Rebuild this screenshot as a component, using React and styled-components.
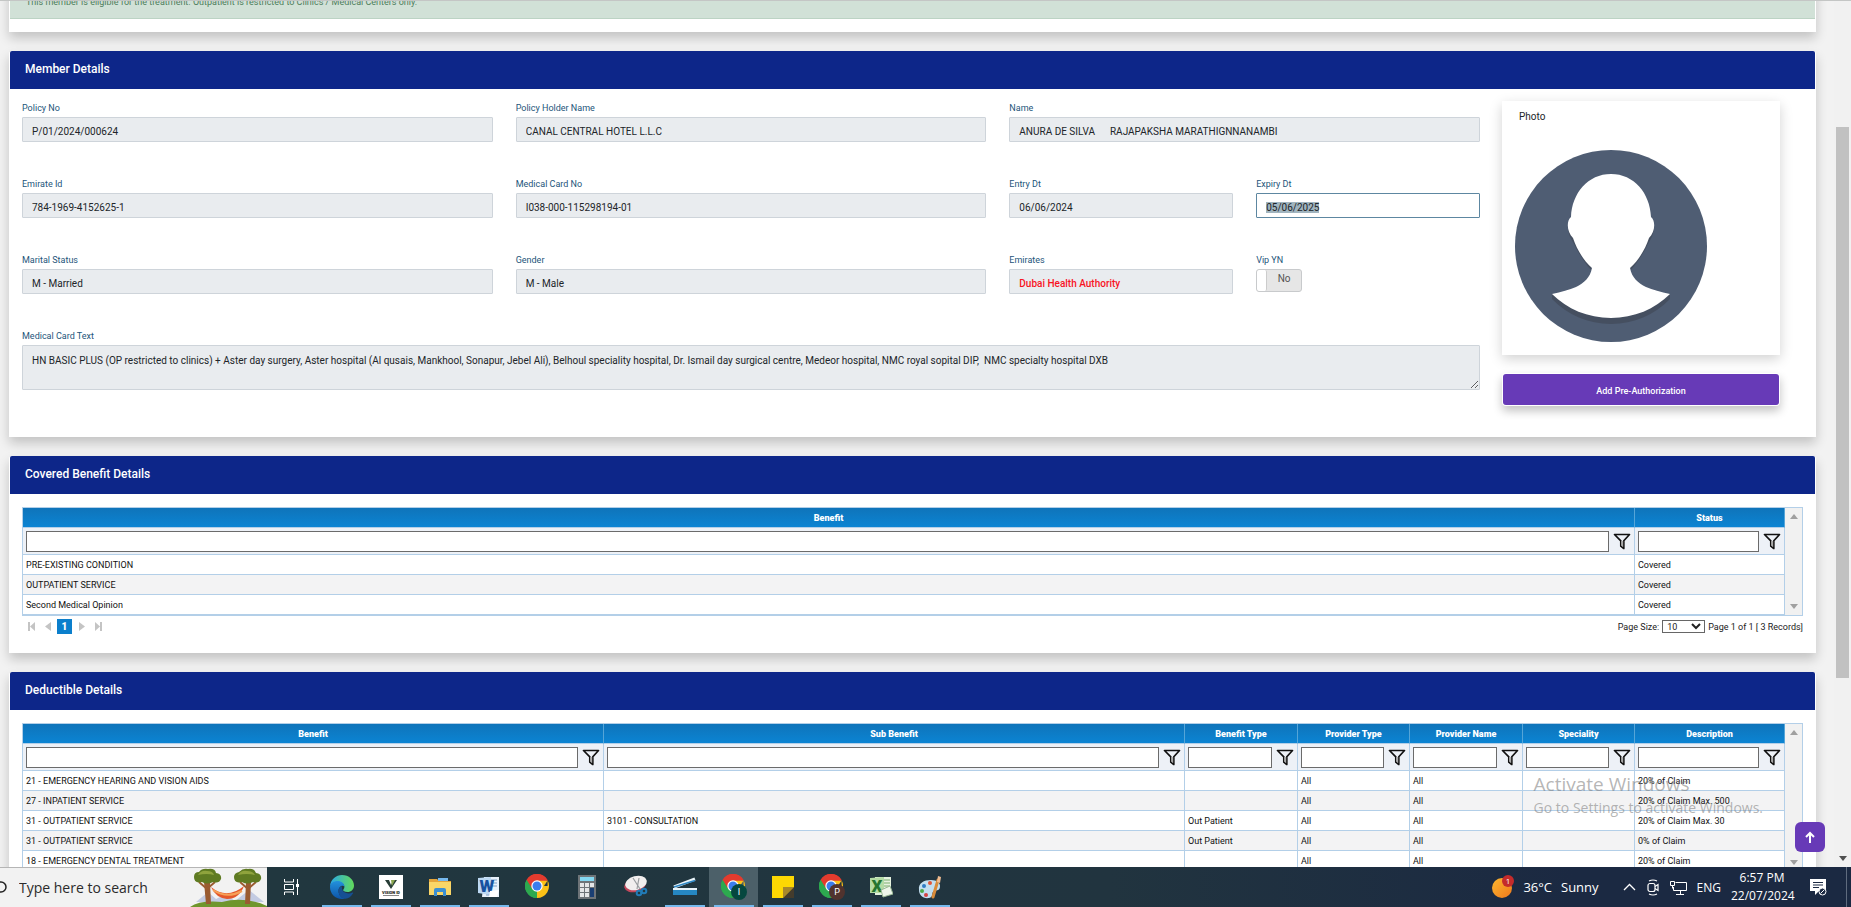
import { useEffect, useRef } from 'react'
import styled, { createGlobalStyle } from 'styled-components'

const GlobalStyle = createGlobalStyle`
    *, *::before, *::after{
        box-sizing: border-box;
    }
    body{
        margin: 0;
        background-color: #f3f3f3;
        font-family: Roboto, "Liberation Sans", sans-serif;
        font-size: 10px;
        color: #212529;
    }
    button, input, select, textarea{
        font-family: inherit;
        font-size: inherit;
        color: inherit;
        margin: 0;
    }
`

const Screen = styled.div`
    height: 100vh;
    display: flex;
    flex-direction: column;
    overflow: hidden;
`

const Browser = styled.div`
    position: relative;
    flex: 1;
    min-height: 0;
    display: flex;
    border-top: 1px solid #c4c6c5;
`

const Page = styled.main`
    flex: 1;
    min-width: 0;
    overflow: hidden;
    padding: 0 18px 0 9px;
    background-color: #f2f2f2;
`

const Scrollbar = styled.div`
    flex: none;
    width: 17px;
    padding: 0 2px;
    background-color: #f1f1f1;
    display: flex;
    flex-direction: column;
    justify-content: space-between;
    align-items: center;
    svg{
        margin-bottom: 6px;
    }
`

const Thumb = styled.div`
    width: 13px;
    height: 551px;
    margin-top: 126px;
    background-color: #c1c1c1;
`

/* cards */

const Card = styled.section`
    margin-bottom: 19px;
    border: 1px solid #fff;
    border-top: none;
    border-radius: 3px 3px 0 0;
    background-color: #fff;
    box-shadow: 0 6px 12px rgba(0, 0, 0, .2);
`

const CardTitle = styled.h2`
    margin: 0;
    height: 38px;
    padding: 0 15px;
    border-radius: 2px 2px 0 0;
    background-color: #0d2689;
    color: #fff;
    font-size: 12px;
    font-weight: 500;
    line-height: 36px;
`

const AlertCard = styled(Card)`
    margin-top: -20px;
    padding-bottom: 12px;
`

const Alert = styled.p`
    margin: 0;
    height: 38px;
    padding: 14px 16px 0;
    border-bottom: 1px solid #bcd3c4;
    background-color: #d1e1d7;
    color: #4d7d5b;
    font-size: 9px;
    line-height: 14px;
`

const MemberBody = styled.div`
    display: grid;
    grid-template-columns: minmax(0, 1fr) 278px;
    gap: 22px;
    padding: 12px 35px 31px 12px;
`

const Fields = styled.form`
    display: grid;
    grid-template-columns: repeat(6, minmax(0, 1fr));
    gap: 35px 23px;
    align-content: start;
`

const FieldStyled = styled.div`
    grid-column: span ${props => props.$span};
    display: flex;
    flex-direction: column;
    align-items: stretch;
    gap: 2px;
    > label:first-child{
        color: #24557a;
        font-size: 9px;
        line-height: 14px;
    }
`

const TextInput = styled.input`
    width: 100%;
    height: 25px;
    padding: 3px 9px 0;
    border: 1px solid ${props => props.$active ? '#5d87a1' : '#ced4da'};
    border-radius: 1px;
    outline: none;
    background-color: ${props => props.$active ? '#fff' : '#e9ecef'};
    color: ${props => props.$alert ? '#f8141f' : '#212529'};
    font-weight: ${props => props.$alert ? 500 : 400};
    &::selection{
        background-color: #a0b4bf;
        color: #212529;
    }
`

const TextArea = styled.textarea`
    display: block;
    width: 100%;
    height: 45px;
    padding: 8px 9px;
    border: 1px solid #ced4da;
    border-radius: 1px;
    outline: none;
    background-color: #e9ecef;
    line-height: 14px;
    resize: vertical;
`

const Toggle = styled.label`
    width: 46px;
    height: 23px;
    display: flex;
    border: 1px solid #c8cacc;
    border-radius: 3px;
    background-color: #e6e6e6;
    overflow: hidden;
    input{
        appearance: none;
        width: 10px;
        border-right: 1px solid #ccc;
        border-radius: 2px;
        background-color: #fff;
    }
    span{
        flex: 1;
        color: #555;
        line-height: 18px;
        text-align: center;
    }
`

const Side = styled.aside`
    display: flex;
    flex-direction: column;
    gap: 19px;
`

const PhotoCard = styled.figure`
    margin: 0;
    height: 254px;
    padding: 9px 13px 13px;
    background-color: #fff;
    box-shadow: 0 4px 12px rgba(0, 0, 0, .18);
    figcaption{
        height: 40px;
        padding-left: 4px;
        line-height: 14px;
    }
    svg{
        display: block;
        width: 192px;
        height: 192px;
    }
`

const PrimaryButton = styled.button`
    height: 31px;
    margin: 0 1px;
    padding: 2px 0 0;
    border: none;
    border-radius: 3px;
    background-color: #673ab7;
    color: #fff;
    font-size: 9px;
    font-weight: 500;
    box-shadow: 0 0 0 1px #fff, 0 5px 10px 1px rgba(0, 0, 0, .24);
`

/* grids */

const GridBody = styled.div`
    padding: 13px 12px 18px;
    font-size: 9px;
`

const GridFrame = styled.div`
    display: flex;
    height: ${props => props.$height}px;
    border: 1px solid #b3cfe8;
    overflow: hidden;
`

const GridScroll = styled.div`
    flex: none;
    width: 17px;
    padding: 6px 0;
    display: flex;
    flex-direction: column;
    justify-content: space-between;
    align-items: center;
    background-color: #f1f1f1;
`

const Table = styled.table`
    flex: 1;
    min-width: 0;
    width: 100%;
    table-layout: fixed;
    border-collapse: separate;
    border-spacing: 0;
    color: #111;
    font-size: 9px;
    th, td{
        padding: 0 3px;
        border-right: 1px solid #b3cfe8;
        border-bottom: 1px solid #b3cfe8;
        text-align: left;
        white-space: nowrap;
    }
    .titles th{
        height: 20px;
        border-right-color: #55a5d8;
        background: linear-gradient(#0f74ba, #0b84d3);
        color: #fff;
        font-weight: 900;
        text-align: center;
    }
    .filters td{
        height: 27px;
        background-color: #edf1f7;
    }
    .record{
        height: 20px;
    }
    .record:nth-child(even){
        background-color: #f3f3f4;
    }
`

const Filter = styled.div`
    display: flex;
    align-items: center;
    gap: 4px;
    input{
        flex: 1;
        min-width: 0;
        height: 21px;
        border: 1px solid #6b6b6b;
        outline: none;
        background-color: #fff;
    }
    button{
        display: flex;
        padding: 0;
        border: none;
        background: none;
    }
`

const Pager = styled.div`
    display: flex;
    justify-content: space-between;
    align-items: center;
    height: 18px;
    padding-top: 3px;
    color: #222;
`

const Pages = styled.nav`
    display: flex;
    align-items: center;
    gap: 2px;
    padding-left: 1px;
    button{
        width: 15px;
        height: 15px;
        padding: 0;
        display: flex;
        align-items: center;
        justify-content: center;
        border: none;
        background: none;
    }
    button[aria-current]{
        background-color: #0b7fcc;
        color: #fff;
        font-size: 10px;
        font-weight: 900;
    }
`

const PageSize = styled.div`
    display: flex;
    align-items: center;
    gap: 3px;
    select{
        width: 43px;
        height: 13px;
        padding: 0;
        border: 1px solid #666;
        border-radius: 0;
        background-color: #fff;
    }
`

/* things that float over the page */

const Watermark = styled.div`
    position: absolute;
    right: 88px;
    bottom: 48px;
    color: rgba(120, 120, 120, .55);
    font-family: "Open Sans", "Noto Sans", sans-serif;
    font-size: 14px;
    line-height: 23px;
    pointer-events: none;
    strong{
        display: block;
        font-size: 19px;
        font-weight: 400;
    }
`

const ScrollTop = styled.button`
    position: absolute;
    right: 26px;
    bottom: 15px;
    width: 30px;
    height: 30px;
    padding: 0;
    display: flex;
    align-items: center;
    justify-content: center;
    border: none;
    border-radius: 6px;
    background-color: #673ab7;
`

/* taskbar */

const Taskbar = styled.footer`
    flex: none;
    height: 40px;
    display: flex;
    align-items: stretch;
    background: linear-gradient(90deg, #21383f 0%, #21343f 60%, #1b2942 85%);
    color: #fff;
    font-family: "Open Sans", "Noto Sans", sans-serif;
    font-size: 14px;
`

const Search = styled.label`
    width: 267px;
    display: flex;
    align-items: center;
    justify-content: space-between;
    border-top: 1px solid #b5b5b5;
    background-color: #f2f2f2;
    color: #2b2b2b;
    input{
        flex: 1;
        min-width: 0;
        padding: 0 0 0 12px;
        border: none;
        outline: none;
        background: none;
    }
    input::placeholder{
        color: #2b2b2b;
        opacity: 1;
    }
`

const Apps = styled.div`
    display: flex;
    padding-left: 1px;
    flex: 1;
`

const AppButton = styled.button`
    width: 49px;
    padding: 0 4px;
    border: none;
    background-color: ${props => props.$active ? '#4c6069' : 'transparent'};
    display: flex;
    flex-direction: column;
    align-items: center;
    justify-content: space-between;
    &::before{
        content: '';
        height: 2px;
    }
    &::after{
        content: '';
        width: 40px;
        height: 2px;
        background-color: ${props => props.$open ? '#76b9ed' : 'transparent'};
    }
`

const Tray = styled.div`
    display: flex;
    align-items: center;
    padding-right: 4px;
    .weather{
        display: flex;
        align-items: center;
        gap: 9px;
        margin-right: 24px;
        font-size: 13px;
    }
    .icons{
        display: flex;
        align-items: center;
        gap: 10px;
        margin-right: 10px;
        font-size: 12px;
    }
    .clock{
        width: 62px;
        margin-right: 17px;
        font-size: 12px;
        line-height: 18px;
        text-align: center;
    }
    .desktop{
        align-self: stretch;
        width: 1px;
        margin-left: 19px;
        background-color: #5f6b7e;
    }
`

const Arrow = ({ up, color = '#a0a0a0' }) => (
    <svg width="8" height="5" viewBox="0 0 8 5">
        <path d={up ? 'M0 5 4 0l4 5z' : 'M0 0h8L4 5z'} fill={color} />
    </svg>
)

const Funnel = () => (
    <svg width="18" height="17" viewBox="0 0 18 17">
        <path d="M1.500 1.500h15l-5.700 6.300v7.700l-3-2.300V7.800z" fill="none" stroke="#111" strokeWidth="1.700" strokeLinejoin="round" />
        <path d="M8.200 8h2v6l-2-1.500z" fill="#aaa" />
    </svg>
)

const PageIcon = ({ d }) => (
    <svg width="8" height="9" viewBox="0 0 8 9">
        <path d={d} fill="#c4c4c4" />
    </svg>
)

const Avatar = () => (
    <svg viewBox="0 0 192 192">
        <circle cx="96" cy="96" r="96" fill="#4f5d73" />
        <path d="M53 76 C53 84 56 89 59 94 C65 106 70 113 76 120 L78 112z M139 76 C139 84 136 89 133 94 C127 106 122 113 116 120 L114 112z" fill="#454f60" />
        <path d="M37 144v5C53 165 73 174 96 174S139 165 155 149v-5z" fill="#454f60" />
        <path d="M96 24 C119 24 135 43 136 67 C141 71 140 82 134 88 C130 100 123 111 115 118 C117 128 123 133 131 137 Q141 141 155 144 C140 159 119 168 96 168 S52 159 37 144 Q51 141 61 137 C69 133 75 128 77 118 C69 111 62 100 58 88 C52 82 51 71 56 67 C57 43 73 24 96 24z" fill="#fff" />
    </svg>
)

const Chrome = ({ badge, color }) => (
    <svg width="26" height="26" viewBox="0 0 26 26">
        <path d="M12 12 1.600 6A12 12 0 0 1 22.400 6z" fill="#e33b2e" />
        <path d="M12 12H22.600V6.300A12 12 0 0 1 12 24z" fill="#fbc116" />
        <path d="M12 12v12A12 12 0 0 1 1.600 6z" fill="#2da94f" />
        <path d="M12 6.500h10.600L17 15z" fill="#fbc116" />
        <path d="M12 6.500h10.700L22.200 5.500A12 12 0 0 0 1.600 6L7 15z" fill="#e33b2e" />
        <path d="M1.600 6 7.200 15 12 17.500l-.5 6.500A12 12 0 0 1 1.600 6z" fill="#2da94f" />
        <circle cx="12" cy="12" r="5.700" fill="#fff" />
        <circle cx="12" cy="12" r="4.500" fill="#3b7ded" />
        {badge && <circle cx="18" cy="18" r="8" fill={color} />}
        {badge && <text x="18" y="21" fill="#fff" fontSize="9" textAnchor="middle" fontFamily="Roboto">{badge}</text>}
    </svg>
)

const Edge = () => (
    <svg width="26" height="26" viewBox="0 0 26 26">
        <defs>
            <linearGradient id="edgeTop" x1="0" x2="1">
                <stop offset="0" stopColor="#2aa8e8" />
                <stop offset="1" stopColor="#62da5a" />
            </linearGradient>
            <linearGradient id="edgeSide" x1="0" y1="0" x2="0" y2="1">
                <stop offset="0" stopColor="#2391dc" />
                <stop offset="1" stopColor="#0d54a8" />
            </linearGradient>
        </defs>
        <path d="M1 12C2 5 7 1 13 1c7 0 12 5 12 10.500 0 4-3 6.500-6.500 6.500-3 0-4.500-1.200-4.300-2 .2-.8 1.200-1.300 1.200-3.200C15.400 10 12 8 8.500 8 4.500 8 2 10 1 12z" fill="url(#edgeTop)" />
        <path d="M1 13c0-4 4-6 7.500-6 4.200 0 7 2.500 6.900 5.500C13 10.500 9.500 13 9.500 17c0 4.500 4 7.600 7 7.700-1 .2-2 .3-3.500.3C6 25 1 19.500 1 13z" fill="url(#edgeSide)" />
        <path d="M9.500 17c0-2 1.200-4 3.500-4.700-1 5.700 5 8.700 10.500 6.200.6-.2.900.2.600.8-2 3.400-4.500 5.200-7.600 5.400-3.500 0-7-3.200-7-7.700z" fill="#164f94" />
    </svg>
)

const VisionId = () => (
    <svg width="24" height="24" viewBox="0 0 24 24">
        <path d="M0 0h24v24H0z" fill="#fff" />
        <path d="M6 5h4l2 5 2-5h4l-6 9z" fill="#273d36" />
        <path d="M12 5h4l-3 6z" fill="#8aa64e" />
        <text x="12" y="19" fontSize="4" fontWeight="900" textAnchor="middle" fill="#222" fontFamily="Roboto">VISION ID</text>
        <path d="M4 20.500h16" stroke="#888" strokeWidth="1" />
    </svg>
)

const Folder = () => (
    <svg width="24" height="22" viewBox="0 0 24 22">
        <path d="M1 3h8l2 2h12v14H1z" fill="#e5a53a" />
        <path d="M10 2h10v3H10z" fill="#77b9ee" />
        <path d="M1 6h22v13H1z" fill="#fad667" />
        <path d="M6 20v-6q0-2 2-2h8q2 0 2 2v6h-3v-4H9v4z" fill="#3c8fd1" />
    </svg>
)

const Word = () => (
    <svg width="24" height="24" viewBox="0 0 24 24">
        <path d="M7 2h15v20H5z" fill="#e8f1fb" />
        <path d="M1 3l13-1v18L1 18z" fill="#bcd8f3" />
        <path d="M14 5h6M15 8h5M15 11h5M9 20h10" stroke="#7f9ec6" />
        <text x="10" y="17" fontSize="17" fontWeight="900" textAnchor="middle" fill="#17529f" fontFamily="Roboto">W</text>
        <path d="M13 16l9-1-2 7h-8z" fill="#fff" />
    </svg>
)

const Calculator = () => (
    <svg width="18" height="24" viewBox="0 0 18 24">
        <path d="M0 0h18v24H0z" fill="#6e7478" />
        <path d="M2 2h14v4H2z" fill="#83d8f2" />
        <path d="M2 8h4v4H2zM7 8h4v4H7zM12 8h4v4h-4zM2 13h4v4H2zM7 13h4v4H7zM2 18h4v4H2zM7 18h4v4H7z" fill="#e4e6e7" />
        <path d="M12 13h4v9h-4z" fill="#1a3f73" />
    </svg>
)

const Snip = () => (
    <svg width="24" height="24" viewBox="0 0 24 24">
        <ellipse cx="11" cy="10" rx="11" ry="7" fill="#c5475b" transform="rotate(-15 11 10)" />
        <ellipse cx="12" cy="8" rx="11" ry="7" fill="#f1eeee" transform="rotate(-15 12 8)" />
        <path d="M9 3l7 11M15 3l-2 11" stroke="#9a9da0" strokeWidth="1.200" />
        <circle cx="15" cy="18" r="2.300" fill="none" stroke="#217bb7" strokeWidth="2" />
        <circle cx="20" cy="16" r="2.300" fill="none" stroke="#217bb7" strokeWidth="2" />
    </svg>
)

const Scanner = () => (
    <svg width="24" height="20" viewBox="0 0 24 20">
        <path d="M1 10 22 2" stroke="#eaf4fa" strokeWidth="3" />
        <path d="M1 10 22 3.500" stroke="#2d87c4" strokeWidth="1.500" />
        <path d="M0 11h24v7H0z" fill="#2687c2" />
        <path d="M0 11h24v2H0z" fill="#e8f3fa" />
    </svg>
)

const Sticky = () => (
    <svg width="22" height="22" viewBox="0 0 22 22">
        <path d="M0 0h22v22H0z" fill="#fdd803" />
        <path d="M11 22V11h11z" fill="#a8892b" />
        <path d="M22 11v11H11z" fill="#443c2c" />
    </svg>
)

const Excel = () => (
    <svg width="24" height="24" viewBox="0 0 24 24">
        <path d="M6 2h16v18H6z" fill="#e5f2df" />
        <path d="M1 3l14-1v16L1 18z" fill="#b3dba4" />
        <path d="M15 5h6M15 8h6M15 11h6" stroke="#7cae70" />
        <text x="8" y="17" fontSize="17" fontWeight="900" textAnchor="middle" fill="#24752f" fontFamily="Roboto">X</text>
        <path d="M12 15l9-4 3 8-10 3z" fill="#eef6ea" stroke="#9ab894" />
    </svg>
)

const Paint = () => (
    <svg width="24" height="25" viewBox="0 0 24 25">
        <path d="M1 15C0 8 6 5 13 5c6 0 9 3 9 6 0 5-3 4-6 5-3 1 0 6-5 7C5 24 1 20 1 15z" fill="#c3dff0" />
        <circle cx="6" cy="11" r="2" fill="#2f7cc5" />
        <circle cx="12" cy="8" r="2" fill="#e05639" />
        <circle cx="4" cy="16" r="2" fill="#4caa49" />
        <circle cx="8" cy="20" r="2" fill="#d44444" />
        <path d="M20 5l-5 17" stroke="#d88b3a" strokeWidth="3" strokeLinecap="round" />
        <path d="M19 7l1-6 3 1-1 6z" fill="#f1bd92" />
    </svg>
)

const TaskView = () => (
    <svg width="17" height="16" viewBox="0 0 17 16" fill="none" stroke="#fff">
        <path d="M1.500 0v3h9V0M1.500 16v-3h9v3M1.500 5.500h9v5h-9zM14.500 0v16" />
        <path d="M13 5h3v3h-3z" fill="#fff" stroke="none" />
    </svg>
)

const Hammock = () => (
    <svg width="77" height="39" viewBox="0 0 77 39">
        <path d="M6 34l12-10 8 7 10-5 9 7 14-11 15 12z" fill="#c3cbe2" />
        <path d="M0 39q10-7 32-5 22-6 45 4v1z" fill="#6f962c" />
        <path d="M14 14l2 22h5l-1-22zM56 14l-1 22h5l1-22z" fill="#9a5b30" />
        <path d="M9 14l8 7 8-7M50 14l8 7 8-7" fill="none" stroke="#9a5b30" strokeWidth="2" />
        <path d="M4 9q0-5 5-5 3-4 9-3 7-1 8 4 6 1 5 6-2 5-8 3-6 3-11 0-8 2-8-5zM44 9q0-4 5-5 4-4 9-3 6-1 8 4 6 1 5 6-2 5-8 3-6 3-11 0-8 2-8-5z" fill="#5f7b22" />
        <path d="M8 7q3-5 9-4 6 0 7 4-7-2-16 0zM48 7q3-5 9-4 6 0 8 4-8-2-17 0z" fill="#8fa33d" />
        <path d="M21 19q16 13 33-1-5 13-17 13-11-1-16-12z" fill="#e4572a" />
        <path d="M23 22q14 9 29 1" fill="none" stroke="#f6a057" strokeWidth="2" />
    </svg>
)

const apps = [
    { name: 'Microsoft Edge', icon: <Edge />, open: true },
    { name: 'Vision ID', icon: <VisionId />, open: true },
    { name: 'File Explorer', icon: <Folder />, open: true },
    { name: 'Word', icon: <Word />, open: true },
    { name: 'Google Chrome', icon: <Chrome /> },
    { name: 'Calculator', icon: <Calculator /> },
    { name: 'Snipping Tool', icon: <Snip /> },
    { name: 'Scan', icon: <Scanner />, open: true },
    { name: 'Google Chrome (I)', icon: <Chrome badge="I" color="#05473f" />, open: true, active: true },
    { name: 'Sticky Notes', icon: <Sticky />, open: true },
    { name: 'Google Chrome (P)', icon: <Chrome badge="P" color="#50332e" />, open: true },
    { name: 'Excel', icon: <Excel />, open: true },
    { name: 'Paint', icon: <Paint />, open: true },
]

const benefitColumns = [
    { title: 'Benefit' },
    { title: 'Status', width: 150 },
]

const benefits = [
    ['PRE-EXISTING CONDITION', 'Covered'],
    ['OUTPATIENT SERVICE', 'Covered'],
    ['Second Medical Opinion', 'Covered'],
]

const deductibleColumns = [
    { title: 'Benefit' },
    { title: 'Sub Benefit' },
    { title: 'Benefit Type', width: 113 },
    { title: 'Provider Type', width: 112 },
    { title: 'Provider Name', width: 113 },
    { title: 'Speciality', width: 112 },
    { title: 'Description', width: 150 },
]

const deductibles = [
    ['21 - EMERGENCY HEARING AND VISION AIDS', '', '', 'All', 'All', '', '20% of Claim'],
    ['27 - INPATIENT SERVICE', '', '', 'All', 'All', '', '20% of Claim Max. 500'],
    ['31 - OUTPATIENT SERVICE', '3101 - CONSULTATION', 'Out Patient', 'All', 'All', '', '20% of Claim Max. 30'],
    ['31 - OUTPATIENT SERVICE', '', 'Out Patient', 'All', 'All', '', '0% of Claim'],
    ['18 - EMERGENCY DENTAL TREATMENT', '', '', 'All', 'All', '', '20% of Claim'],
]

const cardText = 'HN BASIC PLUS (OP restricted to clinics) + Aster day surgery, Aster hospital (Al qusais, Mankhool, Sonapur, Jebel Ali), Belhoul speciality hospital, Dr. Ismail day surgical centre, Medeor hospital, NMC royal sopital DIP,  NMC specialty hospital DXB'

function Field({ id, label, value, span = 2, alert }) {
    return (
        <FieldStyled $span={span}>
            <label htmlFor={id}>{label}</label>
            <TextInput id={id} defaultValue={value} $alert={alert} readOnly />
        </FieldStyled>
    )
}

function DataGrid({ name, columns, rows, height }) {
    return (
        <GridFrame $height={height}>
            <Table>
                <colgroup>
                    {columns.map(column => <col key={column.title} width={column.width} />)}
                </colgroup>
                <thead>
                    <tr className="titles">
                        {columns.map(column => <th key={column.title}>{column.title}</th>)}
                    </tr>
                    <tr className="filters">
                        {columns.map(column => (
                            <td key={column.title}>
                                <Filter>
                                    <input aria-label={`${name} ${column.title}`} />
                                    <button aria-label={`Filter ${column.title}`}><Funnel /></button>
                                </Filter>
                            </td>
                        ))}
                    </tr>
                </thead>
                <tbody>
                    {rows.map((row, i) => (
                        <tr className="record" key={i}>
                            {row.map((cell, j) => <td key={j}>{cell}</td>)}
                        </tr>
                    ))}
                </tbody>
            </Table>
            <GridScroll>
                <Arrow up />
                <Arrow />
            </GridScroll>
        </GridFrame>
    )
}

function MemberDetails() {

    const expiry = useRef(null)

    useEffect(() => {
        expiry.current.focus()
        expiry.current.select()
    }, [])

    return (
        <Card>
            <CardTitle>Member Details</CardTitle>
            <MemberBody>
                <Fields>
                    <Field id="policy" label="Policy No" value="P/01/2024/000624" />
                    <Field id="holder" label="Policy Holder Name" value="CANAL CENTRAL HOTEL L.L.C" />
                    <Field id="name" label="Name" value="ANURA DE SILVA      RAJAPAKSHA MARATHIGNNANAMBI" />
                    <Field id="emirate" label="Emirate Id" value="784-1969-4152625-1" />
                    <Field id="card" label="Medical Card No" value="I038-000-115298194-01" />
                    <Field id="entry" label="Entry Dt" value="06/06/2024" span={1} />
                    <FieldStyled $span={1}>
                        <label htmlFor="expiry">Expiry Dt</label>
                        <TextInput id="expiry" ref={expiry} defaultValue="05/06/2025" $active />
                    </FieldStyled>
                    <Field id="marital" label="Marital Status" value="M - Married" />
                    <Field id="gender" label="Gender" value="M - Male" />
                    <Field id="emirates" label="Emirates" value="Dubai Health Authority" span={1} alert />
                    <FieldStyled $span={1}>
                        <label htmlFor="vip">Vip YN</label>
                        <Toggle>
                            <input id="vip" type="checkbox" />
                            <span>No</span>
                        </Toggle>
                    </FieldStyled>
                    <FieldStyled $span={6}>
                        <label htmlFor="cardText">Medical Card Text</label>
                        <TextArea id="cardText" defaultValue={cardText} readOnly />
                    </FieldStyled>
                </Fields>
                <Side>
                    <PhotoCard>
                        <figcaption>Photo</figcaption>
                        <Avatar />
                    </PhotoCard>
                    <PrimaryButton>Add Pre-Authorization</PrimaryButton>
                </Side>
            </MemberBody>
        </Card>
    )
}

function App() {
    return (
        <Screen>
            <GlobalStyle />
            <Browser>
                <Page>
                    <AlertCard>
                        <Alert>This member is eligible for the treatment. Outpatient is restricted to Clinics / Medical Centers only.</Alert>
                    </AlertCard>
                    <MemberDetails />
                    <Card>
                        <CardTitle>Covered Benefit Details</CardTitle>
                        <GridBody>
                            <DataGrid name="Covered" columns={benefitColumns} rows={benefits} height={109} />
                            <Pager>
                                <Pages>
                                    <button aria-label="First page"><PageIcon d="M1 0h2v9H1zM8 0v9L3 4.500z" /></button>
                                    <button aria-label="Previous page"><PageIcon d="M7 0v9L1 4.500z" /></button>
                                    <button aria-current="page">1</button>
                                    <button aria-label="Next page"><PageIcon d="M1 0v9l6-4.500z" /></button>
                                    <button aria-label="Last page"><PageIcon d="M5 0h2v9H5zM0 0v9l5-4.500z" /></button>
                                </Pages>
                                <PageSize>
                                    <label htmlFor="pageSize">Page Size:</label>
                                    <select id="pageSize" defaultValue="10">
                                        <option>10</option>
                                        <option>20</option>
                                        <option>50</option>
                                    </select>
                                    <span>Page 1 of 1 [ 3 Records]</span>
                                </PageSize>
                            </Pager>
                        </GridBody>
                    </Card>
                    <Card>
                        <CardTitle>Deductible Details</CardTitle>
                        <GridBody>
                            <DataGrid name="Deductible" columns={deductibleColumns} rows={deductibles} height={149} />
                        </GridBody>
                    </Card>
                </Page>
                <Scrollbar>
                    <Thumb />
                    <Arrow color="#505050" />
                </Scrollbar>
                <Watermark>
                    <strong>Activate Windows</strong>
                    Go to Settings to activate Windows.
                </Watermark>
                <ScrollTop aria-label="Back to top">
                    <svg width="12" height="12" viewBox="0 0 12 12" fill="none" stroke="#fff" strokeWidth="2">
                        <path d="M6 12V2M2 6l4-4 4 4" />
                    </svg>
                </ScrollTop>
            </Browser>
            <Taskbar>
                <Search>
                    <svg width="7" height="16" viewBox="0 0 7 16">
                        <circle cx="1" cy="7" r="5" fill="none" stroke="#222" strokeWidth="1.500" />
                    </svg>
                    <input placeholder="Type here to search" />
                    <Hammock />
                </Search>
                <AppButton aria-label="Task View"><TaskView /></AppButton>
                <Apps>
                    {apps.map(app => (
                        <AppButton key={app.name} aria-label={app.name} $open={app.open} $active={app.active}>{app.icon}</AppButton>
                    ))}
                </Apps>
                <Tray>
                    <div className="weather">
                        <svg width="22" height="24" viewBox="0 0 22 24">
                            <defs>
                                <linearGradient id="sun" x1="0" y1="0" x2="1" y2="1">
                                    <stop offset="0" stopColor="#fbb830" />
                                    <stop offset="1" stopColor="#f0781c" />
                                </linearGradient>
                            </defs>
                            <circle cx="10" cy="13" r="10" fill="url(#sun)" />
                            <circle cx="16" cy="6" r="6" fill="#c42b2b" />
                            <text x="16" y="9" fontSize="8" textAnchor="middle" fill="#fff">1</text>
                        </svg>
                        <span>36°C</span>
                        <span>Sunny</span>
                    </div>
                    <div className="icons">
                        <svg width="13" height="8" viewBox="0 0 13 8" fill="none" stroke="#fff" strokeWidth="1.300">
                            <path d="M1 7l5.500-5.500L12 7" />
                        </svg>
                        <svg width="14" height="17" viewBox="0 0 14 17" fill="none" stroke="#fff" strokeWidth="1.200">
                            <rect x="2" y="4.500" width="7" height="8" rx="2" />
                            <path d="M9 7.500l3-2v6l-3-2M3 2q4-2 8 0M3 15q4 2 8 0" />
                        </svg>
                        <svg width="17" height="15" viewBox="0 0 17 15" fill="none" stroke="#fff">
                            <path d="M5.500 2.500h11v8h-13V7M.5 1.500h4v4h-4zM2.500 5.500v3M10.500 10.500v4M6 14.500h8" />
                        </svg>
                        <span>ENG</span>
                    </div>
                    <div className="clock">
                        <div>6:57 PM</div>
                        <div>22/07/2024</div>
                    </div>
                    <svg width="17" height="17" viewBox="0 0 17 17">
                        <path d="M0 0h16v12H9l-4 4v-4H0z" fill="#fff" />
                        <path d="M3 3.500h10M3 6h10M3 8.500h6" stroke="#1b2942" />
                        <circle cx="12.500" cy="12.500" r="3.500" fill="#1b2942" stroke="#fff" />
                        <path d="M10.500 14.500l4-4" stroke="#fff" />
                    </svg>
                    <div className="desktop" />
                </Tray>
            </Taskbar>
        </Screen>
    )
}

export default App
